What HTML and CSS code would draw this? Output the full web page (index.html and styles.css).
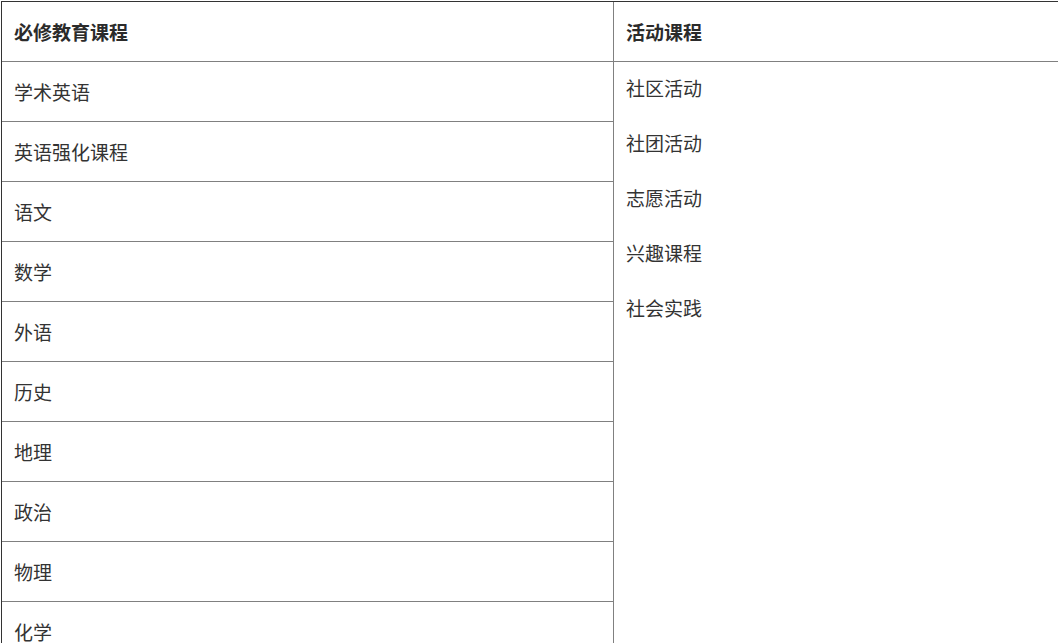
FILE: index.html
```html
<!DOCTYPE html>
<html lang="zh-CN">
<head>
<meta charset="utf-8">
<title>课程</title>
<link rel="stylesheet" href="styles.css">
</head>
<body>
<div class="table">
  <div class="col-main">
    <div class="cell head">必修教育课程</div>
    <div class="cell">学术英语</div>
    <div class="cell">英语强化课程</div>
    <div class="cell">语文</div>
    <div class="cell">数学</div>
    <div class="cell">外语</div>
    <div class="cell">历史</div>
    <div class="cell">地理</div>
    <div class="cell">政治</div>
    <div class="cell">物理</div>
    <div class="cell">化学</div>
  </div>
  <div class="col-side">
    <div class="cell head side-head">活动课程</div>
    <ul class="list">
      <li>社区活动</li>
      <li>社团活动</li>
      <li>志愿活动</li>
      <li>兴趣课程</li>
      <li>社会实践</li>
    </ul>
  </div>
</div>
</body>
</html>
```

FILE: styles.css
```css
html, body {
  margin: 0;
  padding: 0;
  background: #fff;
}
body {
  font-family: "Noto Sans CJK SC", "Noto Sans", sans-serif;
  font-size: 19px;
  color: #333;
  overflow: hidden;
}
.table {
  display: flex;
  margin: 1px 0 0 1px;
  border-top: 1px solid #333;
  border-left: 1px solid #333;
}
.col-main {
  width: 611px;
  flex: none;
  border-right: 1px solid #808080;
}
.col-side {
  flex: 1;
}
.cell {
  height: 60px;
  box-sizing: border-box;
  border-bottom: 1px solid #808080;
  display: flex;
  align-items: center;
  padding-left: 12px;
}
.head {
  font-weight: bold;
  color: #2b2b2b;
}
.side-head {
  padding-left: 12px;
}
.list {
  list-style: none;
  margin: 0;
  padding: 0 0 0 12px;
}
.list li {
  height: 55px;
  line-height: 51px;
}
```
